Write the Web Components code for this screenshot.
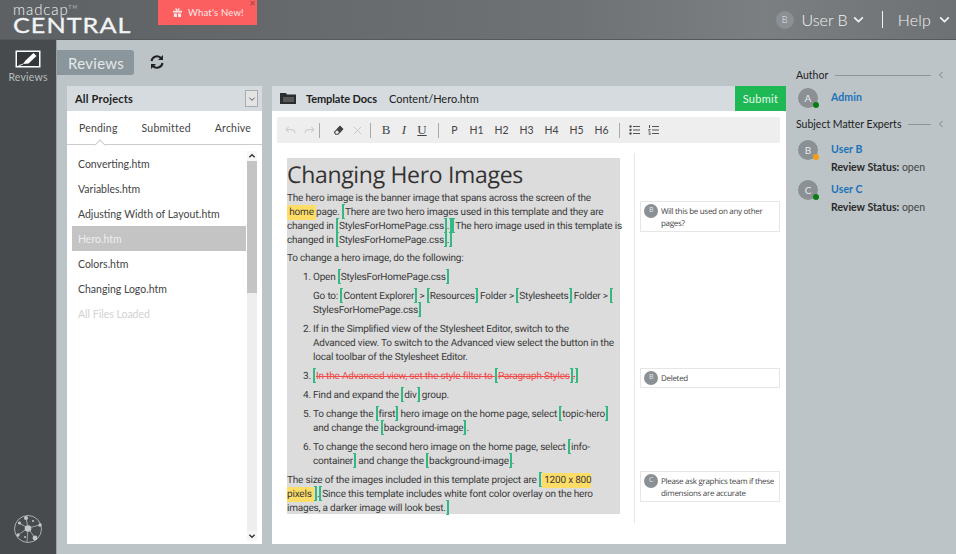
<!DOCTYPE html>
<html>
<head>
<meta charset="utf-8">
<title>MadCap Central Reviews</title>
<style>
  html, body { margin: 0; height: 100%; }
  body {
    width: 956px; height: 554px; overflow: hidden;
    display: flex; flex-direction: column;
    background: #bcc4c7; font-family: Lato, sans-serif; color: #333;
  }
</style>
</head>
<body>
<mc-header></mc-header>
<mc-shell>
  <mc-rail slot="rail"></mc-rail>
  <mc-files slot="files">
    <mc-file>Converting.htm</mc-file>
    <mc-file>Variables.htm</mc-file>
    <mc-file>Adjusting Width of Layout.htm</mc-file>
    <mc-file selected>Hero.htm</mc-file>
    <mc-file>Colors.htm</mc-file>
    <mc-file>Changing Logo.htm</mc-file>
    <mc-file muted>All Files Loaded</mc-file>
  </mc-files>
  <mc-editor slot="editor">
    <mc-doc slot="doc">
      <h1>Changing Hero Images</h1>
      <mc-para style="margin:0 -6px 4px 0">The hero image is the banner image that spans across the screen of the<br><mc-hl>&nbsp;home&nbsp;</mc-hl>page. <mc-change>There are two hero images used in this template and they are changed in <mc-change>StylesForHomePage.css</mc-change>.</mc-change><mc-change>The hero image used in this template is changed in <mc-change>StylesForHomePage.css</mc-change>.</mc-change></mc-para>
      <mc-para>To change a hero image, do the following:</mc-para>
      <mc-step n="1">Open <mc-change>StylesForHomePage.css</mc-change>
        <mc-para slot="more">Go to: <mc-change>Content Explorer</mc-change> &gt; <mc-change>Resources</mc-change> Folder &gt; <mc-change>Stylesheets</mc-change> Folder &gt; <mc-change>StylesForHomePage.css</mc-change></mc-para>
      </mc-step>
      <mc-step n="2">If in the Simplified view of the Stylesheet Editor, switch to the<br>Advanced view. To switch to the Advanced view select the button in the local toolbar of the Stylesheet Editor.</mc-step>
      <mc-step n="3"><mc-change deleted>In the Advanced view, set the style filter to <mc-change deleted>Paragraph Styles</mc-change>.</mc-change></mc-step>
      <mc-step n="4">Find and expand the <mc-change>div</mc-change> group.</mc-step>
      <mc-step n="5">To change the <mc-change>first</mc-change> hero image on the home page, select <mc-change>topic-hero</mc-change> and change the <mc-change>background-image</mc-change>.</mc-step>
      <mc-step n="6">To change the second hero image on the home page, select <mc-change>info-container</mc-change> and change the <mc-change>background-image</mc-change>.</mc-step>
      <mc-para>The size of the images included in this template project are <mc-change><mc-hl>&nbsp;1200 x 800 pixels&nbsp;</mc-hl></mc-change>.<mc-change>Since this template includes white font color overlay on the hero images, a darker image will look best.</mc-change></mc-para>
    </mc-doc>
    <mc-comment slot="comments" who="B" style="margin-top:48px">Will this be used on any other pages?</mc-comment>
    <mc-comment slot="comments" who="B" style="margin-top:136px">Deleted</mc-comment>
    <mc-comment slot="comments" who="C" style="margin-top:83px">Please ask graphics team if these dimensions are accurate</mc-comment>
  </mc-editor>
  <mc-people slot="people">
    <mc-section label="Author" style="margin-bottom:9px">
      <mc-person who="A" dot="#0a7d12" name="Admin"></mc-person>
    </mc-section>
    <mc-section label="Subject Matter Experts">
      <mc-person who="B" dot="#f59d12" name="User B" status="open" style="margin-top:3px"></mc-person>
      <mc-person who="C" dot="#0a7d12" name="User C" status="open"></mc-person>
    </mc-section>
  </mc-people>
</mc-shell>

<script>
const chevronDown = (size, color, width = 1.5) => `<svg width="${size}" height="${size}" viewBox="0 0 12 12" fill="none" stroke="${color}" stroke-width="${width}"><path d="M2 4l4 4 4-4"/></svg>`;

class McAvatar extends HTMLElement {
  constructor() {
    super();
    const size = this.getAttribute("size") || 20;
    const dot = this.getAttribute("dot");
    const shadow = this.attachShadow({ mode: "open" });
    shadow.innerHTML = `
      <style>
        :host {
          position: relative; display: flex; flex: none;
          align-items: center; justify-content: center;
          width: ${size}px; height: ${size}px; border-radius: 50%;
          background: #8a9094; color: #e8eaeb;
          font-size: ${Math.round(size * 0.5)}px;
        }
        i {
          position: absolute; right: -1px; bottom: 0;
          width: 6px; height: 6px; border-radius: 50%;
          background: ${dot};
        }
      </style>
      <slot></slot>${dot ? "<i></i>" : ""}
    `;
  }
}

class McHeader extends HTMLElement {
  constructor() {
    super();
    const shadow = this.attachShadow({ mode: "open" });
    shadow.innerHTML = `
      <style>
        :host {
          display: flex; flex: none; height: 39px; align-items: stretch;
          background: linear-gradient(90deg, #5d6164 0%, #6e7274 60%, #7b7f81 80%, #6d7173 100%);
          border-bottom: 1px solid #55595b;
          color: #f2f3f3;
          box-sizing: content-box;
        }
        .logo { width: 158px; padding: 3px 0 0 13px; box-sizing: border-box; line-height: 1; }
        .mad { display: block; font: 300 15px/13px Lato, sans-serif; letter-spacing: .9px; }
        .mad sup { font-size: 5px; vertical-align: 6px; line-height: 0; }
        .central {
          display: block; font: 400 21px/17px Lato, sans-serif; letter-spacing: .85px;
          -webkit-text-stroke: .3px #f2f3f3; transform: scaleX(1.2); transform-origin: left;
        }
        .news {
          position: relative; display: flex; align-items: center; gap: 6px;
          width: 99px; height: 25px; box-sizing: border-box; padding-left: 15px;
          background: #fb5f5f; color: #fbeaea; font: 9.5px Lato, sans-serif; letter-spacing: .2px;
        }
        .close { position: absolute; right: 1px; top: 0; color: #9a4a4a; font: 8px/8px "DejaVu Sans", sans-serif; }
        .right { margin-left: auto; display: flex; align-items: center; font: 300 16px Lato, sans-serif; }
        .user { margin-left: 8px; }
        .help { letter-spacing: .2px; }
        .bar { width: 1px; height: 17px; background: #f2f3f3; margin: 0 15px 0 17px; }
        svg { display: block; }
      </style>
      <div class="logo"><span class="mad">madcap<sup>TM</sup></span><span class="central">CENTRAL</span></div>
      <div class="news">
        <svg width="9" height="9" viewBox="0 0 10 10" fill="#fbeaea"><path d="M0 3h10v2H0zM1 6h3.400v4H1zM5.600 6H9v4H5.600zM3 .4C4 .1 4.700 1 5 2.600 5.300 1 6 .1 7 .4 8 .8 7.400 2.400 6 2.700H4C2.600 2.400 2 .8 3 .4z"/></svg>
        <span>What's New!</span><span class="close">✕</span>
      </div>
      <div class="right">
        <mc-avatar size="18">B</mc-avatar>
        <span class="user">User B</span>
        <span style="margin-left:4px">${chevronDown(13, "#f2f3f3")}</span>
        <span class="bar"></span>
        <span class="help">Help</span>
        <span style="margin:0 5px 0 7px">${chevronDown(13, "#f2f3f3")}</span>
      </div>
    `;
  }
}

class McRail extends HTMLElement {
  constructor() {
    super();
    const shadow = this.attachShadow({ mode: "open" });
    shadow.innerHTML = `
      <style>
        :host {
          display: flex; flex-direction: column; align-items: center;
          width: 57px; height: 100%; box-sizing: border-box; padding-top: 10px;
          background: #474b4e; border-right: 1px solid #99a2a5;
          color: #b8bcbd; font: 10.5px Lato, sans-serif;
        }
        span { margin-top: 3px; letter-spacing: .2px; }
        svg { display: block; }
        .net { margin-top: auto; margin-bottom: 10px; }
      </style>
      <svg width="26" height="18" viewBox="0 0 26 18">
        <rect x=".5" y=".5" width="25" height="17" fill="#fff"/>
        <rect x="2" y="2" width="22" height="14" fill="#33373a"/>
        <path d="M8 14l2.500-3.500 8-7.500 3 3-8 7.500z" fill="#fff"/>
        <path d="M3.500 15.500c2-.4 3.500-.8 4.500-1.500" stroke="#fff" fill="none"/>
      </svg>
      <span>Reviews</span>
      <svg class="net" width="30" height="30" viewBox="0 0 30 30" fill="#c3c7c8" stroke="#c3c7c8">
        <circle cx="15" cy="15" r="13.500" fill="none" stroke-width=".8"/>
        <path d="M15 14L13 4M15 14L6 9M15 14L27 11M15 14L5 21M15 14L22 24M15 14L14 28" fill="none" stroke-width=".7"/>
        <circle cx="15" cy="14.500" r="3.300" stroke="none"/>
        <circle cx="13" cy="4" r="2" stroke="none"/>
        <circle cx="6.500" cy="9" r="1.600" stroke="none"/>
        <circle cx="20" cy="7" r="1" stroke="none"/>
        <circle cx="27" cy="11" r="1.700" stroke="none"/>
        <circle cx="5" cy="21" r="1.700" stroke="none"/>
        <circle cx="22" cy="24" r="2.400" stroke="none"/>
        <circle cx="12" cy="23" r="1" stroke="none"/>
      </svg>
    `;
  }
}

class McShell extends HTMLElement {
  constructor() {
    super();
    const shadow = this.attachShadow({ mode: "open" });
    shadow.innerHTML = `
      <style>
        :host { display: flex; flex: 1; min-height: 0; }
        .main { flex: 1; display: flex; flex-direction: column; min-width: 0; }
        .top { display: flex; align-items: center; height: 25px; margin-top: 10px; }
        .tab {
          display: flex; align-items: center; padding-left: 11px;
          width: 77px; height: 25px; box-sizing: border-box;
          background: #8a969b; border-radius: 0 3px 3px 0;
          color: #e4e8e9; font: 15px Lato, sans-serif; letter-spacing: .3px;
        }
        .sync { margin: -2px 0 0 15px; display: block; }
        .panels { flex: 1; display: flex; gap: 10px; padding: 11px 0 10px 10px; min-height: 0; }
      </style>
      <slot name="rail"></slot>
      <div class="main">
        <div class="top">
          <div class="tab">Reviews</div>
          <svg class="sync" width="16" height="16" viewBox="0 0 16 16" fill="none" stroke="#222" stroke-width="2">
            <path d="M2.500 7A5.600 5.600 0 0 1 12.400 4.400M13.500 9A5.600 5.600 0 0 1 3.600 11.600"/>
            <path d="M14 1v5h-5z M2 15v-5h5z" fill="#222" stroke="none"/>
          </svg>
        </div>
        <div class="panels">
          <slot name="files"></slot>
          <slot name="editor"></slot>
          <slot name="people"></slot>
        </div>
      </div>
    `;
  }
}

class McFile extends HTMLElement {
  constructor() {
    super();
    const shadow = this.attachShadow({ mode: "open" });
    shadow.innerHTML = `
      <style>
        :host {
          display: flex; align-items: center; height: 25px; box-sizing: border-box;
          padding-left: 6px; color: #444; font: 10.5px Lato, sans-serif;
        }
        :host([selected]) { background: #c4c4c4; color: #eee; }
        :host([muted]) { color: #d2d2d2; }
      </style>
      <slot></slot>
    `;
  }
}

class McFiles extends HTMLElement {
  constructor() {
    super();
    const shadow = this.attachShadow({ mode: "open" });
    shadow.innerHTML = `
      <style>
        :host { display: flex; flex-direction: column; flex: none; width: 195px; background: #fff; }
        .head {
          display: flex; align-items: center; justify-content: space-between;
          height: 25px; padding: 0 4px 0 8px; flex: none;
          background: #d5dbde; color: #222; font: 700 11px Lato, sans-serif; letter-spacing: .2px;
        }
        .select {
          display: flex; align-items: center; justify-content: center;
          width: 11px; height: 15px; background: #e4e4e4; border: 1px solid #aaa;
        }
        .tabs {
          position: relative; display: flex;
          height: 34px; padding: 11px 0 0 12px; box-sizing: border-box; flex: none;
          border-bottom: 1px solid #ccc;
          color: #444; font: 10.5px Lato, sans-serif; letter-spacing: .2px;
        }
        .tabs span:nth-child(2) { margin-left: 24px; }
        .tabs span:nth-child(3) { margin-left: 24px; }
        .notch {
          position: absolute; left: 29px; bottom: -1px; width: 7px; height: 7px;
          background: #fff; border: 1px solid #ccc; border-width: 1px 0 0 1px;
          transform: translateY(4px) rotate(45deg);
        }
        .body { flex: 1; display: flex; min-height: 0; padding: 6px 5px 3px; }
        .list { flex: 1; padding-top: 0; }
        .scroll { width: 10px; margin-left: 1px; display: flex; flex-direction: column; background: #eee; }
        .arrow { height: 10px; display: flex; align-items: center; justify-content: center; background: #f6f6f6; }
        .thumb { height: 132px; background: #c4c4c4; }
        .gap { flex: 1; }
        svg { display: block; }
      </style>
      <div class="head">All Projects<span class="select">${chevronDown(8, "#555")}</span></div>
      <div class="tabs"><span>Pending</span><span>Submitted</span><span>Archive</span><i class="notch"></i></div>
      <div class="body">
        <div class="list"><slot></slot></div>
        <div class="scroll">
          <div class="arrow"><svg width="8" height="8" viewBox="0 0 12 12" fill="none" stroke="#333" stroke-width="2"><path d="M2 8l4-4 4 4"/></svg></div>
          <div class="thumb"></div><div class="gap"></div>
          <div class="arrow">${chevronDown(8, "#333", 2)}</div>
        </div>
      </div>
    `;
  }
}

class McToolbar extends HTMLElement {
  constructor() {
    super();
    const shadow = this.attachShadow({ mode: "open" });
    const heads = ["P", "H1", "H2", "H3", "H4", "H5", "H6"].map((h) => `<span class="h">${h}</span>`).join("");
    shadow.innerHTML = `
      <style>
        :host {
          display: flex; align-items: center; height: 26px; flex: none; margin: 6px 6px 0 5px;
          padding-left: 4px; background: #eee; border-radius: 2px;
          color: #444; font: 10.5px Lato, sans-serif;
        }
        .sep { width: 1px; height: 15px; background: #aaa; margin: 0 8px; }
        svg { display: block; }
        .i { width: 19px; display: flex; justify-content: center; }
        .fmt { width: 18px; text-align: center; font: 13px "Liberation Serif", serif; color: #444; }
        .h { width: 25px; text-align: center; }
        .h:first-child { width: 19px; }
      </style>
      <span class="i"><svg width="11" height="9" viewBox="0 0 12 10" fill="none" stroke="#d0d0d0" stroke-width="1.2"><path d="M4 1L1 4l3 3M1 4h6c3 0 4 2 4 4"/></svg></span>
      <span class="i"><svg width="11" height="9" viewBox="0 0 12 10" fill="none" stroke="#d0d0d0" stroke-width="1.2"><path d="M8 1l3 3-3 3M11 4H5C2 4 1 6 1 8"/></svg></span>
      <span class="sep" style="margin-left:0"></span>
      <span class="i" style="margin-left:1px"><svg width="11" height="11" viewBox="0 0 12 12" fill="none" stroke="#444" stroke-width="1.100"><path d="M7.500 1.500l3 3-5 5.500H3L1.500 8z"/><path d="M7.500 1.500l3 3-3 3.300-3-3z" fill="#444"/></svg></span>
      <span class="i"><svg width="9" height="9" viewBox="0 0 10 10" stroke="#c9c9c9" stroke-width="1.100"><path d="M1 1l8 8M9 1l-8 8"/></svg></span>
      <span class="sep" style="margin-left:3px;margin-right:6px"></span>
      <span class="fmt">B</span>
      <span class="fmt"><i>I</i></span>
      <span class="fmt" style="text-decoration:underline">U</span>
      <span class="sep" style="margin-left:7px;margin-right:6px"></span>
      <span style="display:flex">${heads}</span>
      <span class="sep" style="margin-left:5px;margin-right:7px"></span>
      <span class="i" style="width:14px"><svg width="11" height="10" viewBox="0 0 11 10" fill="#555"><circle cx="1.500" cy="1.500" r="1.200"/><circle cx="1.500" cy="5" r="1.200"/><circle cx="1.500" cy="8.500" r="1.200"/><path d="M4 1h7v1H4zM4 4.500h7v1H4zM4 8h7v1H4z"/></svg></span>
      <span class="i" style="width:15px;margin-left:5px"><svg width="11" height="10" viewBox="0 0 11 10" fill="#555"><path d="M1 0h1v3H1zM.5 4h2v1h-1v1h1v.5h-2zM.5 7.500h2v2.500h-2V9.500h1.200V9H.8V8.500h.9V8H.5zM4 1h7v1H4zM4 4.500h7v1H4zM4 8h7v1H4z"/></svg></span>
    `;
  }
}

class McEditor extends HTMLElement {
  constructor() {
    super();
    const shadow = this.attachShadow({ mode: "open" });
    shadow.innerHTML = `
      <style>
        :host { display: flex; flex-direction: column; flex: none; width: 514px; background: #fff; }
        .head {
          display: flex; align-items: center; height: 25px; flex: none; padding-left: 8px;
          background: #d5dbde; color: #222; font: 11px Lato, sans-serif;
        }
        .head b { margin: 0 12px 0 10px; letter-spacing: -.1px; }
        .submit {
          margin-left: auto; align-self: stretch; width: 51px;
          display: flex; align-items: center; justify-content: center;
          background: #1eb955; color: #e9f8ee; letter-spacing: .3px;
        }
        svg { display: block; }
        .body { flex: 1; display: flex; min-height: 0; padding: 10px 6px 21px 15px; }
        .rule {
          margin-left: 14px; width: 5px; border-left: 1px solid #e6e6e6;
          flex: none;
        }
        .notes { flex: 1; display: flex; flex-direction: column; min-width: 0; }
      </style>
      <div class="head">
        <svg width="16" height="11" viewBox="0 0 16 11"><path d="M0 0h6l1 1.500h9V11H0z" fill="#2b2d2e"/><rect x="3" y="4" width="11" height="5" fill="#55595b"/></svg>
        <b>Template Docs</b><span>Content/Hero.htm</span>
        <div class="submit">Submit</div>
      </div>
      <mc-toolbar></mc-toolbar>
      <div class="body">
        <slot name="doc"></slot>
        <div class="rule"></div>
        <div class="notes"><slot name="comments"></slot></div>
      </div>
    `;
  }
}

class McDoc extends HTMLElement {
  constructor() {
    super();
    const shadow = this.attachShadow({ mode: "open" });
    shadow.innerHTML = `
      <style>
        :host {
          display: block; flex: none; width: 333px; height: 356px; box-sizing: border-box;
          margin-top: 5px; background: #dcdcdc; color: #3a3a3a;
          font: 10px/14px Roboto, sans-serif; letter-spacing: -.2px; text-rendering: geometricPrecision;
        }
        ::slotted(h1) { margin: 0 0 2px; font: 400 23px/32px "Open Sans", sans-serif; color: #333; letter-spacing: -.32px; }
      </style>
      <slot></slot>
    `;
  }
}

class McPara extends HTMLElement {
  constructor() {
    super();
    const shadow = this.attachShadow({ mode: "open" });
    shadow.innerHTML = `<style>:host { display: block; margin-bottom: 5px; }</style><slot></slot>`;
  }
}

class McStep extends HTMLElement {
  constructor() {
    super();
    const shadow = this.attachShadow({ mode: "open" });
    shadow.innerHTML = `
      <style>
        :host { display: flex; margin: 0 0 5px 16px; }
        .n { width: 10px; flex: none; }
        .c { flex: 1; min-width: 0; }
        ::slotted([slot="more"]) { margin: 5px 0 0; }
      </style>
      <span class="n">${this.getAttribute("n")}.</span>
      <div class="c"><slot></slot><slot name="more"></slot></div>
    `;
  }
}

class McHl extends HTMLElement {
  constructor() {
    super();
    const shadow = this.attachShadow({ mode: "open" });
    shadow.innerHTML = `<style>:host { background: #ffdd66; padding: 2px 0; }</style><slot></slot>`;
  }
}

// inline element: no whitespace around the brackets, it would show as a space in the text
class McChange extends HTMLElement {
  constructor() {
    super();
    const shadow = this.attachShadow({ mode: "open" });
    shadow.innerHTML = `<style>
        :host([deleted]) { color: #f04a4a; text-decoration: line-through; }
        i {
          display: inline-block; width: 3px; height: 15px; vertical-align: -2px; margin: -2px 0;
          border: 1px solid #35b982; box-sizing: border-box;
        }
        .o { border-right: 0; border-left-width: 2px; }
        .c { border-left: 0; border-right-width: 2px; }
      </style><i class="o"></i><slot></slot><i class="c"></i>`;
  }
}

class McComment extends HTMLElement {
  constructor() {
    super();
    const shadow = this.attachShadow({ mode: "open" });
    shadow.innerHTML = `
      <style>
        :host {
          display: flex; gap: 3px; box-sizing: border-box; flex: none; min-height: 20px;
          background: #fff; border: 1px solid #e6e6e6; padding: 3px 3px 1px;
          color: #444; font: 8px/12px "Open Sans", sans-serif; letter-spacing: -.3px;
          text-rendering: geometricPrecision;
        }
        mc-avatar { margin-top: -1px; }
        p { margin: 1px 0 0; }
      </style>
      <mc-avatar size="14">${this.getAttribute("who")}</mc-avatar>
      <p><slot></slot></p>
    `;
  }
}

class McSection extends HTMLElement {
  constructor() {
    super();
    const shadow = this.attachShadow({ mode: "open" });
    shadow.innerHTML = `
      <style>
        :host { display: block; }
        .title {
          display: flex; align-items: center; gap: 7px; height: 14px;
          color: #222; font: 10.5px Lato, sans-serif;
        }
        .line { flex: 1; height: 1px; background: #8f9699; }
        svg { display: block; }
      </style>
      <div class="title">${this.getAttribute("label")}<span class="line"></span>
        <svg width="6" height="8" viewBox="0 0 6 8" fill="none" stroke="#7c8386"><path d="M4.500 1L1.500 4l3 3"/></svg></div>
      <slot></slot>
    `;
  }
}

class McPerson extends HTMLElement {
  constructor() {
    super();
    const status = this.getAttribute("status");
    const shadow = this.attachShadow({ mode: "open" });
    shadow.innerHTML = `
      <style>
        :host {
          display: flex; gap: 13px; padding: 6px 0 0 2px; font: 10.5px Lato, sans-serif;
        }
        .text { padding-top: 2px; }
        .name { color: #1b72b8; font-weight: 700; line-height: 14px; letter-spacing: .1px; }
        .status { margin-top: 4px; line-height: 14px; color: #444; }
        .status b { color: #2a2a2a; }
      </style>
      <mc-avatar size="20" dot="${this.getAttribute("dot")}">${this.getAttribute("who")}</mc-avatar>
      <div class="text">
        <div class="name">${this.getAttribute("name")}</div>
        ${status ? `<div class="status"><b>Review Status:</b> ${status}</div>` : ""}
      </div>
    `;
  }
}

class McPeople extends HTMLElement {
  constructor() {
    super();
    const shadow = this.attachShadow({ mode: "open" });
    shadow.innerHTML = `
      <style>
        :host { display: block; flex: 1; min-width: 0; padding: 1px 12px 0 0; margin-top: -19px; }
      </style>
      <slot></slot>
    `;
  }
}

customElements.define("mc-avatar", McAvatar);
customElements.define("mc-header", McHeader);
customElements.define("mc-rail", McRail);
customElements.define("mc-shell", McShell);
customElements.define("mc-file", McFile);
customElements.define("mc-files", McFiles);
customElements.define("mc-toolbar", McToolbar);
customElements.define("mc-editor", McEditor);
customElements.define("mc-doc", McDoc);
customElements.define("mc-para", McPara);
customElements.define("mc-step", McStep);
customElements.define("mc-hl", McHl);
customElements.define("mc-change", McChange);
customElements.define("mc-comment", McComment);
customElements.define("mc-section", McSection);
customElements.define("mc-person", McPerson);
customElements.define("mc-people", McPeople);
</script>
</body>
</html>
